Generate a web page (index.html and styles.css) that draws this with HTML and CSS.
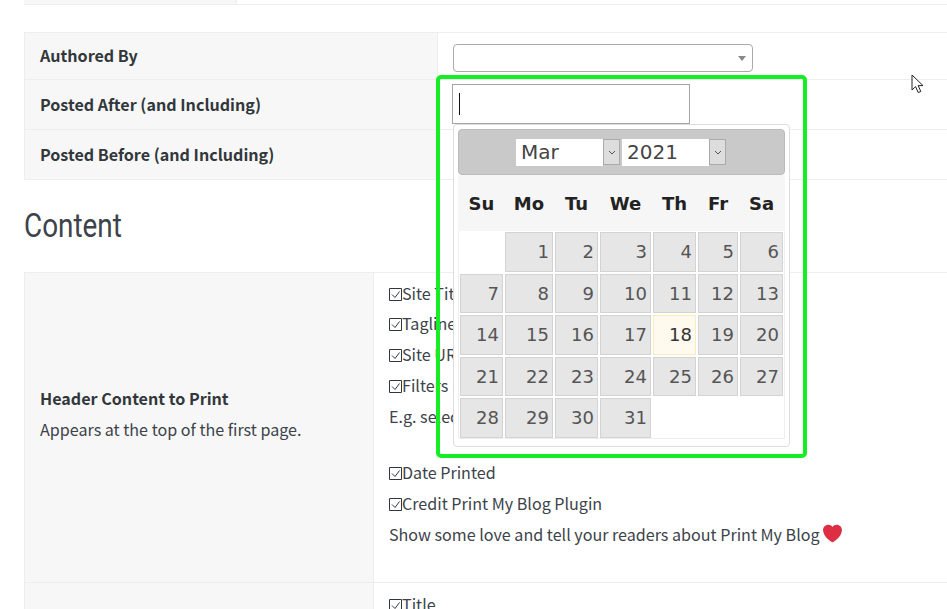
FILE: index.html
```html
<!DOCTYPE html>
<html lang="en">
<head>
    <meta charset="UTF-8">
    <title>Print My Blog Setup</title>
    <link rel="stylesheet" href="styles.css">
</head>
<body>
    <svg class="icon-defs" width="0" height="0">
        <symbol id="tick" viewBox="0 0 13 13">
            <path d="M.5.5h12v12H.5z"/>
            <path d="M3 6.5l3 3 4.5-6"/>
        </symbol>
    </svg>

    <div class="top-strip"><div class="top-strip-cell"></div></div>

    <table class="form-table filters-table">
        <tr>
            <th>Authored By</th>
            <td>
                <div class="select-box"><span class="select-arrow"></span></div>
            </td>
        </tr>
        <tr>
            <th>Posted After (and Including)</th>
            <td><div class="date-input"><span class="caret"></span></div></td>
        </tr>
        <tr>
            <th>Posted Before (and Including)</th>
            <td></td>
        </tr>
    </table>

    <h2 class="section-title">Content</h2>

    <table class="form-table content-table">
        <tr>
            <th>
                Header Content to Print
                <span class="field-help">Appears at the top of the first page.</span>
            </th>
            <td class="checks">
                <p><svg class="tick"><use href="#tick"/></svg>Site Title</p>
                <p><svg class="tick"><use href="#tick"/></svg>Tagline</p>
                <p><svg class="tick"><use href="#tick"/></svg>Site URL</p>
                <p><svg class="tick"><use href="#tick"/></svg>Filters</p>
                <p class="hint">E.g. selected categories and dates</p>
                <p><svg class="tick"><use href="#tick"/></svg>Date Printed</p>
                <p><svg class="tick"><use href="#tick"/></svg>Credit Print My Blog Plugin</p>
                <p>Show some love and tell your readers about Print My Blog
                    <svg class="heart" viewBox="0 0 36 36" width="19" height="19"><path d="M35.9 11.2C35.9 5.7 31.4 1.3 26 1.3c-3.3 0-6.3 1.6-8 4.2-1.7-2.6-4.7-4.2-8-4.2C4.5 1.3.1 5.7.1 11.2c0 1 .1 1.9.4 2.8C2.5 25.6 15.6 33.6 18 34.7c2.4-1.1 15.5-9.1 17.5-20.7.3-.9.4-1.8.4-2.8z"/></svg>
                </p>
            </td>
        </tr>
        <tr>
            <th></th>
            <td class="checks checks-next"><p><svg class="tick"><use href="#tick"/></svg>Title</p></td>
        </tr>
    </table>

    <div class="datepicker">
        <div class="dp-head">
            <div class="dp-select dp-month">Mar</div>
            <div class="dp-btn"><svg viewBox="0 0 8 5" width="8" height="5"><path d="M1 1l3 3 3-3"/></svg></div>
            <div class="dp-select dp-year">2021</div>
            <div class="dp-btn"><svg viewBox="0 0 8 5" width="8" height="5"><path d="M1 1l3 3 3-3"/></svg></div>
        </div>
        <div class="dp-weekdays">
            <span>Su</span><span>Mo</span><span>Tu</span><span>We</span><span>Th</span><span>Fr</span><span>Sa</span>
        </div>
        <div class="dp-days">
            <span class="empty"></span>
            <a>1</a><a>2</a><a>3</a><a>4</a><a>5</a><a>6</a>
            <a>7</a><a>8</a><a>9</a><a>10</a><a>11</a><a>12</a><a>13</a>
            <a>14</a><a>15</a><a>16</a><a>17</a><a class="today">18</a><a>19</a><a>20</a>
            <a>21</a><a>22</a><a>23</a><a>24</a><a>25</a><a>26</a><a>27</a>
            <a>28</a><a>29</a><a>30</a><a>31</a>
        </div>
    </div>

    <!-- green annotation drawn over the page -->
    <div class="highlight"></div>

    <svg class="pointer" viewBox="0 0 13 20" width="13" height="20">
        <path d="M1 1v15l3.6-3.4 2.6 6 2.6-1.1-2.6-5.9H12z"/>
    </svg>
</body>
</html>
```

FILE: styles.css
```css
html {
    overflow: hidden;
}
body {
    margin: 0;
    height: 609px;
    overflow: hidden;
    position: relative;
    font-family: "Noto Sans CJK JP", "Noto Sans", sans-serif;
    font-size: 16.1px;
    color: #3c434a;
    background: white;
}
.icon-defs {
    position: absolute;
}
.top-strip {
    height: 4px;
    margin-left: 24px;
    border-bottom: 1px solid #eee;
}
.top-strip-cell {
    width: 212px;
    height: 4px;
    background: #f7f7f7;
    border-right: 1px solid #eee;
}
.form-table {
    width: 923px;
    margin-left: 24px;
    border-collapse: collapse;
    table-layout: fixed;
}
.form-table th,
.form-table td {
    border: 1px solid #eee;
    border-right: none;
    padding: 0 15px;
    line-height: 24px;
    text-align: left;
}
.form-table th {
    background: #f7f7f7;
    font-weight: 700;
    color: #32373c;
}
.filters-table {
    margin-top: 27px;
}
.filters-table th {
    width: 382px;
    padding-bottom: 2px;
}
.filters-table tr {
    height: 50px;
}
.filters-table tr:first-child {
    height: 47px;
}
.filters-table td {
    vertical-align: top;
}
.select-box {
    width: 292px;
    height: 26px;
    margin-top: 11px;
    padding-right: 6px;
    border: 1px solid #aaa;
    border-radius: 4px;
    display: flex;
    align-items: center;
    justify-content: flex-end;
}
.select-arrow {
    width: 0;
    height: 0;
    border-left: 4px solid transparent;
    border-right: 4px solid transparent;
    border-top: 5px solid #888;
}
.date-input {
    width: 230px;
    height: 38px;
    margin: 4px 0 0 -1px;
    padding-left: 6px;
    border: 1px solid #a5a5a5;
    display: flex;
    align-items: center;
}
.caret {
    width: 1px;
    height: 22px;
    background: #111;
}
.section-title {
    margin: 0 0 0 24px;
    padding: 24px 0 25px;
    font-family: Roboto, sans-serif;
    font-weight: 400;
    font-size: 33px;
    line-height: 43px;
    color: #3c434a;
    transform: scaleX(0.845);
    transform-origin: left;
}
.content-table th {
    width: 318px;
    vertical-align: middle;
    padding-bottom: 28px;
}
.content-table tr:first-child {
    height: 310px;
}
.field-help {
    display: block;
    margin-top: 7px;
    font-weight: 400;
    color: #3c434a;
}
.checks {
    vertical-align: top;
    padding-top: 7.5px !important;
}
.checks-next {
    padding-top: 9px !important;
}
.checks p {
    margin: 0 0 6.75px;
}
.checks .hint {
    margin-bottom: 32.75px;
}
.tick {
    width: 13px;
    height: 13px;
    vertical-align: -1px;
    fill: none;
    stroke: #32373c;
    stroke-width: 1;
}
.heart {
    fill: #dd2e44;
    vertical-align: -2px;
}
.datepicker {
    position: absolute;
    left: 453px;
    top: 124px;
    width: 327px;
    padding: 4px 4px 7px;
    background: white;
    border: 1px solid #ddd;
    border-radius: 4px;
    font-family: "DejaVu Sans", Verdana, sans-serif;
}
.dp-head {
    height: 46px;
    box-sizing: border-box;
    padding-right: 1px;
    display: flex;
    align-items: center;
    justify-content: center;
    background: #c9c9c9;
    border: 1px solid #bbb;
    border-radius: 4px;
}
.dp-select {
    width: 87px;
    height: 27px;
    padding-left: 5px;
    box-sizing: border-box;
    background: white;
    color: #444;
    font-size: 20px;
    line-height: 27px;
}
.dp-btn {
    width: 17px;
    height: 26px;
    box-sizing: border-box;
    background: #ddd;
    border: 1px solid #aaa;
    display: flex;
    align-items: center;
    justify-content: center;
}
.dp-btn + .dp-select {
    margin-left: 2px;
}
.dp-btn path {
    fill: none;
    stroke: #555;
}
.dp-weekdays,
.dp-days {
    display: grid;
    grid-template-columns: 43px 48px 43px 51px 43px 40px 43px;
    column-gap: 2px;
    padding: 0 2px;
}
.dp-weekdays {
    height: 56px;
    align-items: center;
    background: #f6f6f6;
    text-align: center;
    font-weight: 700;
    font-size: 18px;
    color: #222;
}
.dp-days {
    grid-auto-rows: 39.5px;
    row-gap: 2px;
    padding: 1px 1px 0;
    border: 1px solid #eee;
    border-top: none;
    font-size: 18px;
    color: #555;
}
.dp-days a {
    background: #e6e6e6;
    border: 1px solid #d3d3d3;
    text-align: right;
    padding: 1px 3px 0 0;
    line-height: 36.5px;
}
.dp-days .today {
    background: #fffaed;
    border-color: #f7eebd;
    color: #333;
}
.highlight {
    position: absolute;
    left: 436px;
    top: 75px;
    width: 363px;
    height: 375px;
    border: 4px solid #15ee25;
    border-radius: 5px;
    pointer-events: none;
}
.pointer {
    position: absolute;
    left: 911px;
    top: 74px;
}
.pointer path {
    fill: white;
    stroke: #222;
    stroke-width: 1;
}
```
